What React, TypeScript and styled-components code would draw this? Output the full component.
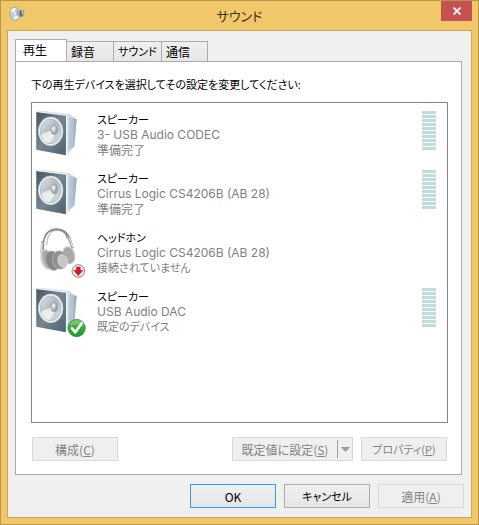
import React, { useState } from "react";
import styled, { createGlobalStyle, css } from "styled-components";

const GlobalStyle = createGlobalStyle`
  *, *::before, *::after { box-sizing: border-box; }
  body { margin: 0; }
  body, button {
    font-family: "Noto Sans CJK JP", "Noto Sans", sans-serif;
    font-size: 12px;
    line-height: 15px;
    font-feature-settings: "palt" 1;
  }
`;

const Window = styled.div`
  display: flex;
  flex-direction: column;
  min-height: 100vh;
  padding: 0 6px 6px;
  background: #f0c869;
  border: 1px solid #b9964b;
`;

const TitleBar = styled.header`
  display: grid;
  grid-template-columns: 31px 1fr 31px;
  height: 29px;
`;

const TitleIcon = styled.svg`
  width: 16px;
  height: 16px;
  margin: 5px 2px;
`;

const Title = styled.h1`
  margin: 0;
  font-size: 13px;
  line-height: 30px;
  font-weight: 400;
  text-align: center;
  color: #3a3222;
`;

const CloseButton = styled.button`
  display: flex;
  align-items: center;
  justify-content: center;
  height: 20px;
  padding: 0;
  border: 0;
  background: #c75050;
`;

const Client = styled.main`
  flex: 1;
  display: flex;
  flex-direction: column;
  padding: 8px 7px 9px;
  background: #f0f0f0;
  border: 1px solid #c9a558;
`;

const TabList = styled.div`
  display: flex;
  align-items: flex-end;
  height: 23px;
  margin-bottom: -1px;
`;

const Tab = styled.button<{ $active: boolean; $width: number; $kana?: boolean }>`
  width: ${(p) => p.$width}px;
  padding: 0 0 0 4px;
  text-align: left;
  font-size: ${(p) => (p.$kana ? 11 : 12)}px;
  color: #000;
  border: 1px solid #acacac;
  ${(p) =>
    p.$active
      ? css`
          height: 23px;
          padding: 0 0 2px 7px;
          background: #fff;
          border-bottom-color: #fff;
        `
      : css`
          height: 21px;
          margin-left: -1px;
          background: linear-gradient(#f0f0f0, #e6e6e6);
        `}
`;

const Panel = styled.section`
  flex: 1;
  display: flex;
  flex-direction: column;
  margin-right: 2px;
  padding: 14px 13px 13px 15px;
  background: #fff;
  border: 1px solid #acacac;
`;

const Instruction = styled.p`
  margin: 0 0 10px;
  font-size: 11px;
  line-height: 16px;
`;

const DeviceList = styled.ul`
  flex: 1;
  margin: 0 0 14px;
  padding: 7px 11px 7px 4px;
  list-style: none;
  border: 1px solid #828790;
`;

const Device = styled.li`
  display: flex;
  align-items: flex-start;
  gap: 11px;
  height: 59px;
`;

const DeviceIcon = styled.svg`
  flex: none;
  width: 50px;
  height: 50px;
`;

const DeviceText = styled.div`
  flex: 1;
  color: #808080;
  padding-top: 2px;
`;

const DeviceName = styled.div`
  font-size: 11px;
  color: #000;
`;

const DeviceDetail = styled.div`
  font-family: Inter, sans-serif;
  font-size: 12px;
`;

const DeviceStatus = styled.div<{ $kana: boolean }>`
  font-size: ${(p) => (p.$kana ? 11 : 12)}px;
`;

const Meter = styled.div`
  display: grid;
  grid-template-rows: repeat(10, 3px);
  gap: 1px;
  width: 14px;
  margin-top: 1px;
`;

const MeterBar = styled.span`
  background: #c1dce1;
`;

const ButtonRow = styled.div`
  display: flex;
  gap: 8px;
  margin-left: 1px;
  margin-right: 1px;
`;

const Spacer = styled.span`
  flex: 1;
`;

const PushButton = styled.button<{ $primary?: boolean; $kana?: boolean }>`
  width: 86px;
  height: 24px;
  padding: 0;
  font-size: ${(p) => (p.$kana ? 11 : 12)}px;
  color: #000;
  background: linear-gradient(#f0f0f0, #e5e5e5);
  border: 1px solid ${(p) => (p.$primary ? "#3399ff" : "#acacac")};
  &:disabled {
    color: #838383;
    background: #efefef;
    border-color: #d9d9d9;
  }
`;

const SplitButton = styled(PushButton)`
  display: flex;
  align-items: center;
  width: 121px;
`;

const SplitLabel = styled.span`
  flex: 1;
`;

const SplitArrow = styled.span`
  display: flex;
  align-items: center;
  justify-content: center;
  width: 15px;
  height: 18px;
  border-left: 1px solid #a0a0a0;
`;

const Footer = styled.footer`
  display: flex;
  justify-content: flex-end;
  gap: 8px;
  padding-top: 9px;
`;

const Speaker = () => (
  <g>
    <path d="M1 5 L12 2 L100 12 L122 28 L115 108 L90 136 L1 119 Z" fill="#d4dde5" />
    <path d="M91 17 L122 28 L115 109 L90 136 Z" fill="url(#side)" />
    <path d="M99 22 L113 28 L108 108 L96 121 Z" fill="#b3c2d0" opacity=".7" />
    <path d="M1 5 L91 16 L90 136 L1 119 Z" fill="url(#front)" />
    <path d="M2 5 L92 16 L91 135" fill="none" stroke="#f4f8fa" strokeWidth="3" />
    <ellipse cx="44" cy="64" rx="37" ry="43" fill="#eef2f4" stroke="#c5cdd3" strokeWidth="2" />
    <ellipse cx="44" cy="64" rx="31" ry="37" fill="url(#cone)" stroke="#a3adb4" strokeWidth="2" />
    <path d="M55 60 Q30 64 16 75 Q19 96 41 99 Q54 84 58 70Z" fill="#fafcfc" opacity=".75" />
    <ellipse cx="55" cy="60" rx="10" ry="14" fill="url(#cap)" stroke="#929da5" strokeWidth="2" />
  </g>
);

const Headphones = () => (
  <g fill="none" strokeLinecap="round">
    <path d="M22 64 C20 26 32 6 60 3 C85 2 99 18 106 46" stroke="#858585" strokeWidth="5" />
    <path d="M32 50 C34 20 48 4 70 5" stroke="#c2c2c2" strokeWidth="4" />
    <path d="M44 8 C65 2 88 6 94 30" stroke="#949494" strokeWidth="5" />
    <path d="M19 42 L17 74 M98 28 L109 58" stroke="#a6a6a6" strokeWidth="8" />
    <path d="M18 44 L16 72 M100 30 L110 56" stroke="#ececec" strokeWidth="3" />
    <ellipse cx="98" cy="82" rx="18" ry="26" transform="rotate(-12 98 82)" fill="#a9a9a9" stroke="#cfcfcf" strokeWidth="3" />
    <ellipse cx="33" cy="94" rx="17" ry="29" transform="rotate(-14 33 94)" fill="#a8a8a8" stroke="#d1d1d1" strokeWidth="4" />
    <ellipse cx="50" cy="98" rx="20" ry="29" transform="rotate(-14 50 98)" fill="#868686" stroke="#9c9c9c" strokeWidth="3" />
    <ellipse cx="71" cy="96" rx="22" ry="27" transform="rotate(-18 71 96)" fill="#909090" stroke="#a9a9a9" strokeWidth="3" />
    <ellipse cx="80" cy="99" rx="14" ry="20" transform="rotate(-15 80 99)" fill="#c6c6c6" stroke="#dcdcdc" strokeWidth="2" />
    <path d="M18 78 Q19 104 32 117" stroke="#c5c5c5" strokeWidth="4" />
  </g>
);

const UnpluggedBadge = () => (
  <g>
    <circle cx="127" cy="129" r="19" fill="#e8e8e8" stroke="#858585" strokeWidth="3" />
    <path d="M121 117 H133 V127 H141 L127 143 L113 127 H121Z" fill="#d81920" stroke="#b40d15" />
  </g>
);

const DefaultBadge = () => (
  <g>
    <circle cx="122" cy="123" r="26" fill="url(#ok)" stroke="#289435" strokeWidth="2" />
    <path d="M99 116 Q106 99 124 99 Q140 100 145 113 Q123 112 99 116Z" fill="#86cf73" opacity=".7" />
    <path d="M108 124 L118 136 L137 109" fill="none" stroke="#fff" strokeWidth="8" strokeLinecap="round" strokeLinejoin="round" />
  </g>
);

const Gradients = () => (
  <defs>
    <linearGradient id="front" x2="1" y2="1">
      <stop stopColor="#465562" />
      <stop offset=".48" stopColor="#758692" />
      <stop offset="1" stopColor="#4f6070" />
    </linearGradient>
    <linearGradient id="side">
      <stop stopColor="#e8f0f6" />
      <stop offset="1" stopColor="#91a4b9" />
    </linearGradient>
    <linearGradient id="cone" x2="1" y2="1">
      <stop stopColor="#e6eaec" />
      <stop offset=".45" stopColor="#b2bac0" />
      <stop offset="1" stopColor="#dde3e5" />
    </linearGradient>
    <radialGradient id="cap" cx=".35" cy=".35">
      <stop stopColor="#fff" />
      <stop offset="1" stopColor="#9ba5ac" />
    </radialGradient>
    <linearGradient id="ok" x2="0" y2="1">
      <stop stopColor="#5cb64d" />
      <stop offset="1" stopColor="#169c29" />
    </linearGradient>
  </defs>
);

type DeviceInfo = {
  name: string;
  detail: string;
  status: string;
  kanaStatus: boolean;
  kind: "speaker" | "headphones";
  isDefault?: boolean;
};

const devices: DeviceInfo[] = [
  { name: "スピーカー", detail: "3- USB Audio CODEC", status: "準備完了", kanaStatus: false, kind: "speaker" },
  { name: "スピーカー", detail: "Cirrus Logic CS4206B (AB 28)", status: "準備完了", kanaStatus: false, kind: "speaker" },
  { name: "ヘッドホン", detail: "Cirrus Logic CS4206B (AB 28)", status: "接続されていません", kanaStatus: true, kind: "headphones" },
  { name: "スピーカー", detail: "USB Audio DAC", status: "既定のデバイス", kanaStatus: true, kind: "speaker", isDefault: true },
];

const tabs = [
  { label: "再生", width: 52 },
  { label: "録音", width: 48 },
  { label: "サウンド", width: 49, kana: true },
  { label: "通信", width: 47 },
];

export default function App() {
  const [active, setActive] = useState(0);
  return (
    <>
      <GlobalStyle />
      <Window>
        <TitleBar>
          <TitleIcon viewBox="0 0 48 48" aria-hidden="true">
            <path d="M18 4 L31 13 L44 12 Q49 23 40 34 L31 32 L22 45Z" fill="#8c969e" />
            <path d="M33 14 L40 17 L37 31 L31 29Z" fill="#59636e" />
            <path d="M38 15 L43 17 L40 25" fill="#eef3f8" />
            <ellipse cx="17" cy="24" rx="15" ry="20" fill="#c4cbd1" stroke="#929ba2" strokeWidth="2" />
            <path d="M17 24 L5 14 Q11 4 20 7Z M17 24 L29 34 Q23 42 15 41Z" fill="#f0f4f7" />
            <path d="M17 24 L27 12 Q32 22 29 30Z" fill="#9eabb5" />
            <ellipse cx="18" cy="23" rx="5" ry="7" fill="#e4eaee" stroke="#8d9ba6" />
          </TitleIcon>
          <Title>サウンド</Title>
          <CloseButton aria-label="閉じる">
            <svg width="8" height="8" viewBox="0 0 8 8" aria-hidden="true">
              <path d="M0.5 0.5 L7.5 7.5 M7.5 0.5 L0.5 7.5" stroke="#fff" strokeWidth="1.8" />
            </svg>
          </CloseButton>
        </TitleBar>
        <Client>
          <TabList role="tablist">
            {tabs.map((tab, i) => (
              <Tab
                key={tab.label}
                role="tab"
                aria-selected={i === active}
                $active={i === active}
                $width={tab.width}
                $kana={tab.kana}
                onClick={() => setActive(i)}
              >
                {tab.label}
              </Tab>
            ))}
          </TabList>
          <Panel>
            <Instruction>下の再生デバイスを選択してその設定を変更してください:</Instruction>
            <DeviceList>
              {devices.map((d, i) => (
                <Device key={i}>
                  <DeviceIcon viewBox="0 0 150 150" aria-hidden="true">
                    <Gradients />
                    {d.kind === "speaker" ? <Speaker /> : <Headphones />}
                    {d.kind === "headphones" && <UnpluggedBadge />}
                    {d.isDefault && <DefaultBadge />}
                  </DeviceIcon>
                  <DeviceText>
                    <DeviceName>{d.name}</DeviceName>
                    <DeviceDetail>{d.detail}</DeviceDetail>
                    <DeviceStatus $kana={d.kanaStatus}>{d.status}</DeviceStatus>
                  </DeviceText>
                  {d.kind === "speaker" && (
                    <Meter>
                      {Array.from({ length: 10 }, (_, n) => (
                        <MeterBar key={n} />
                      ))}
                    </Meter>
                  )}
                </Device>
              ))}
            </DeviceList>
            <ButtonRow>
              <PushButton disabled>
                構成(<u>C</u>)
              </PushButton>
              <Spacer />
              <SplitButton disabled>
                <SplitLabel>
                  既定値に設定(<u>S</u>)
                </SplitLabel>
                <SplitArrow>
                  <svg width="9" height="5" viewBox="0 0 9 5" aria-hidden="true">
                    <path d="M0 0 H9 L4.5 5Z" fill="#999" />
                  </svg>
                </SplitArrow>
              </SplitButton>
              <PushButton disabled $kana>
                プロパティ(<u>P</u>)
              </PushButton>
            </ButtonRow>
          </Panel>
          <Footer>
            <PushButton $primary>OK</PushButton>
            <PushButton $kana>キャンセル</PushButton>
            <PushButton disabled>
              適用(<u>A</u>)
            </PushButton>
          </Footer>
        </Client>
      </Window>
    </>
  );
}
